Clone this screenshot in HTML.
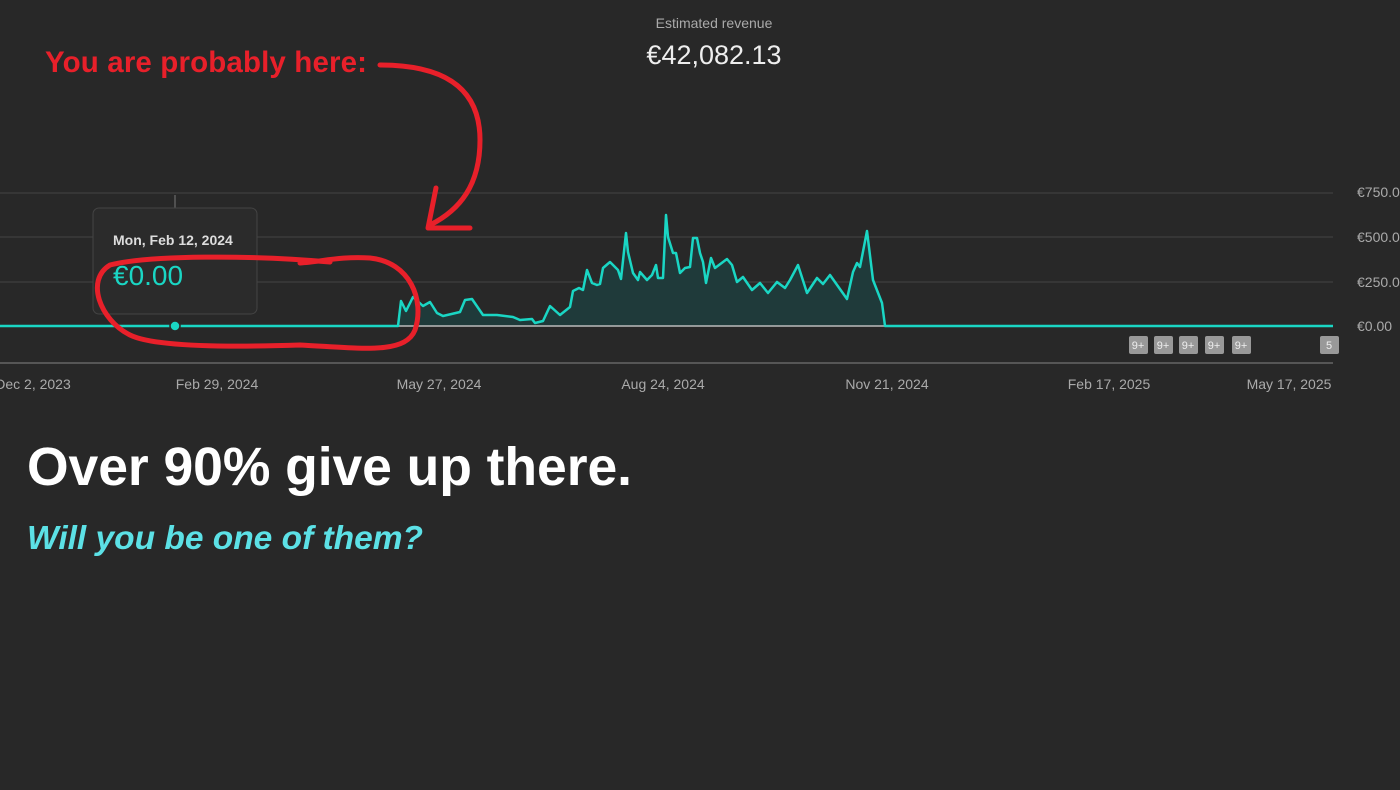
<!DOCTYPE html>
<html><head><meta charset="utf-8"><style>
body{margin:0;width:1400px;height:790px;background:#282828;overflow:hidden;position:relative;font-family:"Liberation Sans",sans-serif}
.a{position:absolute}
</style></head><body>
<div class="a" style="left:0;width:1428px;top:15px;text-align:center;color:#aaa;font-size:14px">Estimated revenue</div>
<div class="a" style="left:0;width:1428px;top:40px;text-align:center;color:#eee;font-size:27px">€42,082.13</div>
<svg class="a" style="left:0;top:0" width="1400" height="790">
<g stroke="#3a3a3a" stroke-width="1.5"><line x1="0" y1="193" x2="1333" y2="193"/><line x1="0" y1="237" x2="1333" y2="237"/><line x1="0" y1="282" x2="1333" y2="282"/></g>
<line x1="0" y1="363" x2="1333" y2="363" stroke="#666" stroke-width="1.5"/>
<line x1="175" y1="195" x2="175" y2="208" stroke="#777"/>
<g font-size="14" fill="#aaa"><text x="1357" y="197">€750.00</text><text x="1357" y="242">€500.00</text><text x="1357" y="287">€250.00</text><text x="1357" y="331">€0.00</text>
<text x="33" y="389" text-anchor="middle">Dec 2, 2023</text><text x="217" y="389" text-anchor="middle">Feb 29, 2024</text><text x="439" y="389" text-anchor="middle">May 27, 2024</text><text x="663" y="389" text-anchor="middle">Aug 24, 2024</text><text x="887" y="389" text-anchor="middle">Nov 21, 2024</text><text x="1109" y="389" text-anchor="middle">Feb 17, 2025</text><text x="1289" y="389" text-anchor="middle">May 17, 2025</text></g>
<path d="M398,326 L401,301 406,311 413,297 423,306 430,302 437,313 443,316 460,312 465,300 472,299 483,315 497,315 513,317 520,320 532,319 535,323 543,321 550,306 560,315 570,307 573,291 579,288 583,290 587,270 592,283 597,285 600,284 603,268 610,262 618,270 621,279 626,233 628,252 633,273 638,280 640,272 647,280 652,275 656,265 658,278 663,278 666,215 668,237 673,253 676,253 680,273 685,268 690,267 693,238 697,238 700,253 703,262 706,283 711,258 715,268 727,259 732,265 737,282 743,277 752,290 760,283 768,293 777,282 785,288 790,280 798,265 807,293 817,278 823,284 830,275 847,299 853,272 857,263 860,267 867,231 873,280 882,303 885,326 Z" fill="#1f3a3a"/>
<line x1="398" y1="326" x2="885" y2="326" stroke="#bbb" stroke-width="1.5"/>
<path d="M0,326 L398,326 401,301 406,311 413,297 423,306 430,302 437,313 443,316 460,312 465,300 472,299 483,315 497,315 513,317 520,320 532,319 535,323 543,321 550,306 560,315 570,307 573,291 579,288 583,290 587,270 592,283 597,285 600,284 603,268 610,262 618,270 621,279 626,233 628,252 633,273 638,280 640,272 647,280 652,275 656,265 658,278 663,278 666,215 668,237 673,253 676,253 680,273 685,268 690,267 693,238 697,238 700,253 703,262 706,283 711,258 715,268 727,259 732,265 737,282 743,277 752,290 760,283 768,293 777,282 785,288 790,280 798,265 807,293 817,278 823,284 830,275 847,299 853,272 857,263 860,267 867,231 873,280 882,303 885,326 1333,326" fill="none" stroke="#1ad6c4" stroke-width="2.5" stroke-linejoin="round"/>
<rect x="93" y="208" width="164" height="106" rx="6" fill="#2b2b2b" stroke="#444"/>
<text x="113" y="245" font-size="14" fill="#ddd" font-weight="bold">Mon, Feb 12, 2024</text>
<text x="113" y="285" font-size="28" fill="#1ad6c4">€0.00</text>
<circle cx="175" cy="326" r="5" fill="#1ad6c4" stroke="#282828" stroke-width="1.5"/>
<g font-size="11" fill="#eee" text-anchor="middle">
<rect x="1129" y="336" width="19" height="18" rx="2" fill="#999"/><text x="1138" y="349">9+</text>
<rect x="1154" y="336" width="19" height="18" rx="2" fill="#999"/><text x="1163" y="349">9+</text>
<rect x="1179" y="336" width="19" height="18" rx="2" fill="#999"/><text x="1188" y="349">9+</text>
<rect x="1205" y="336" width="19" height="18" rx="2" fill="#999"/><text x="1214" y="349">9+</text>
<rect x="1232" y="336" width="19" height="18" rx="2" fill="#999"/><text x="1241" y="349">9+</text>
<rect x="1320" y="336" width="19" height="18" rx="2" fill="#999"/><text x="1329" y="349">5</text></g>
<g fill="none" stroke="#e8202a" stroke-width="5" stroke-linecap="round" stroke-linejoin="round">
<path d="M380,65 C440,65 480,85 480,140 C480,185 460,210 430,225"/>
<path d="M436,188 L428,228 L470,228"/>
<path d="M330,262 C250,255 150,255 110,265 C85,280 100,320 130,335 C150,345 210,348 300,345 C360,348 405,355 415,330 C425,300 410,262 370,258 C340,256 320,262 300,263"/>
</g>
<text x="45" y="72" font-size="29.5" font-weight="bold" fill="#e8202a" textLength="322">You are probably here:</text>
<text x="27" y="485" font-size="53.5" font-weight="bold" fill="#fff" textLength="605">Over 90% give up there.</text>
<text x="27" y="549" font-size="33.5" font-weight="bold" font-style="italic" fill="#5ce1e6" textLength="396">Will you be one of them?</text>
</svg>
</body></html>
